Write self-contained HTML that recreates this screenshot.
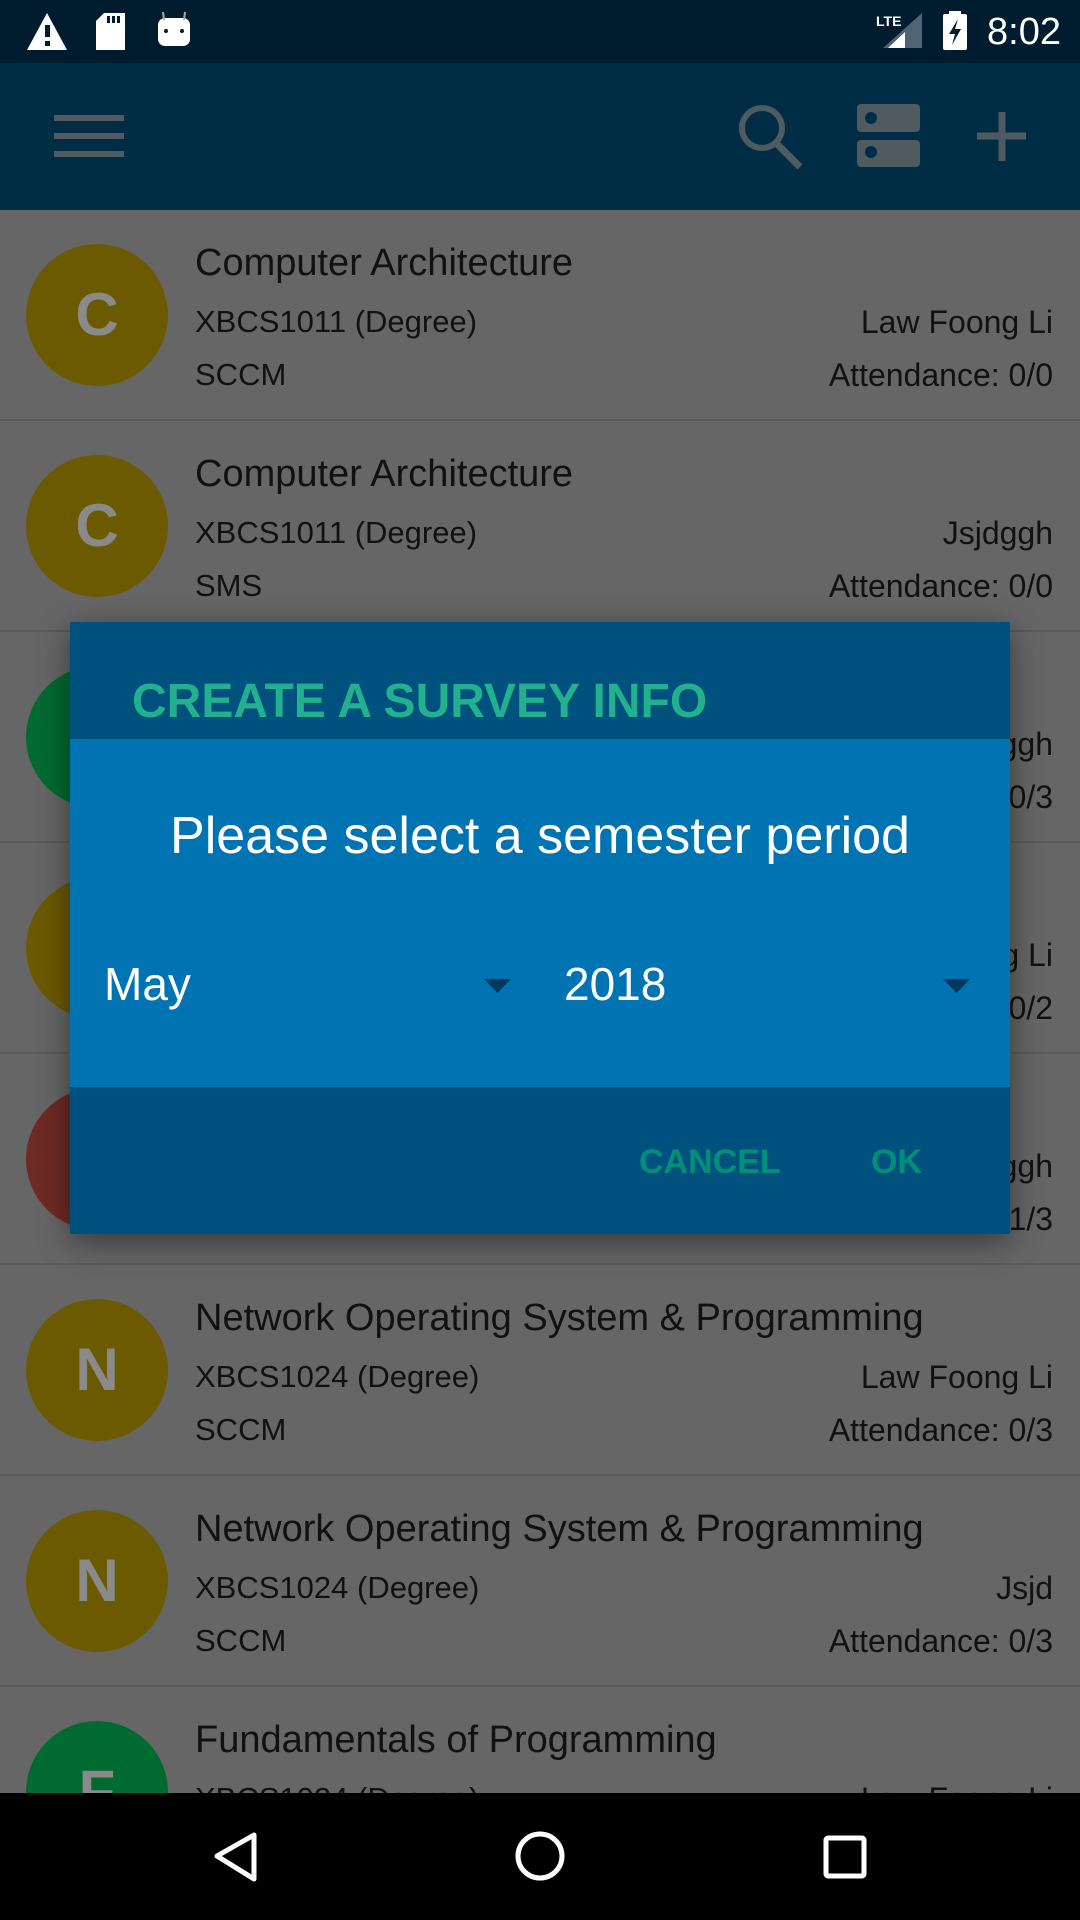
<!DOCTYPE html>
<html><head><meta charset="utf-8"><style>
*{margin:0;padding:0;box-sizing:border-box}
body{width:1080px;height:1920px;overflow:hidden;background:#666;font-family:"Liberation Sans",sans-serif;position:relative}
.abs{position:absolute}
.row{position:absolute;left:0;width:1080px;height:211px;border-bottom:2px solid #5a5a5a}
.av{position:absolute;left:26px;top:34px;width:142px;height:142px;border-radius:50%;color:#8a8a8a;font-size:60px;text-align:center;line-height:142px;font-weight:bold}
.t{position:absolute;left:195px;top:32px;font-size:38px;color:#111;white-space:nowrap}
.l2{position:absolute;left:195px;top:94px;font-size:31px;color:#111;white-space:nowrap}
.l3{position:absolute;left:195px;top:147px;font-size:31px;color:#111;white-space:nowrap}
.r2{position:absolute;right:27px;top:94px;font-size:32px;color:#111;white-space:nowrap}
.r3{position:absolute;right:27px;top:147px;font-size:32px;color:#111;white-space:nowrap}
</style></head><body>
<div class="abs" style="left:0;top:0;width:1080px;height:63px;background:#001c2e"></div>
<svg class="abs" style="left:0;top:0" width="1080" height="63">
<path d="M47 13 L67 50 L27 50 Z" fill="#fff"/><rect x="45" y="25" width="5" height="12" fill="#001c2e"/><rect x="45" y="41" width="5" height="5" fill="#001c2e"/>
<path d="M104 13 H125 V50 H96 V21 Z" fill="#fff"/><rect x="107" y="16" width="3" height="7" fill="#001c2e"/><rect x="112" y="16" width="3" height="7" fill="#001c2e"/><rect x="117" y="16" width="3" height="7" fill="#001c2e"/>
<rect x="158" y="18" width="32" height="28" rx="7" fill="#fff"/><path d="M164 20 L163 12 M184 20 L185 12" stroke="#aaa" stroke-width="2"/><circle cx="166" cy="31" r="2" fill="#001c2e"/><circle cx="182" cy="31" r="2" fill="#001c2e"/>
<text x="876" y="26" font-size="14" font-weight="bold" fill="#fff" font-family="Liberation Sans">LTE</text>
<path d="M922 13 V48 H883 Z" fill="#4e6373"/><path d="M905 32 V48 H888 Z" fill="#fff"/>
<rect x="943" y="14" width="24" height="36" rx="2" fill="#fff"/><rect x="949" y="11" width="12" height="4" fill="#fff"/>
<path d="M958 19 L949 34 H955 L952 45 L961 29 H955 Z" fill="#001c2e"/>
<text x="987" y="44" font-size="38" fill="#fff" font-family="Liberation Sans">8:02</text>
</svg>
<div class="abs" style="left:0;top:63px;width:1080px;height:147px;background:#002d45"></div>
<svg class="abs" style="left:0;top:63px" width="1080" height="147">
<g fill="#4f5a61"><rect x="54" y="52" width="70" height="6"/><rect x="54" y="70" width="70" height="6"/><rect x="54" y="88" width="70" height="6"/></g>
<circle cx="762" cy="65" r="20" fill="none" stroke="#4f5a61" stroke-width="6"/><path d="M776 80 L800 104" stroke="#4f5a61" stroke-width="7"/>
<rect x="857" y="41" width="63" height="28" rx="4" fill="#4f5a61"/><rect x="857" y="77" width="63" height="27" rx="4" fill="#4f5a61"/>
<circle cx="871" cy="55" r="6" fill="#002d45"/><circle cx="871" cy="89" r="6" fill="#002d45"/>
<path d="M977 73 H1026 M1002 49 V98" stroke="#4f5a61" stroke-width="7"/>
</svg>

<div class="row" style="top:210px"><div class="av" style="background:#6b5a00">C</div><div class="t">Computer Architecture</div><div class="l2">XBCS1011 (Degree)</div><div class="r2">Law Foong Li</div><div class="l3">SCCM</div><div class="r3">Attendance: 0/0</div></div>
<div class="row" style="top:421px"><div class="av" style="background:#6b5a00">C</div><div class="t">Computer Architecture</div><div class="l2">XBCS1011 (Degree)</div><div class="r2">Jsjdggh</div><div class="l3">SMS</div><div class="r3">Attendance: 0/0</div></div>
<div class="row" style="top:632px"><div class="av" style="background:#006b30">D</div><div class="t">Data Structures</div><div class="l2">XBCS1012 (Degree)</div><div class="r2">Jsjdggh</div><div class="l3">SCCM</div><div class="r3">Attendance: 0/3</div></div>
<div class="row" style="top:843px"><div class="av" style="background:#6b5a00">C</div><div class="t">Computer Architecture</div><div class="l2">XBCS1011 (Degree)</div><div class="r2">Law Foong Li</div><div class="l3">SCCM</div><div class="r3">Attendance: 0/2</div></div>
<div class="row" style="top:1054px"><div class="av" style="background:#6e2a25">M</div><div class="t">Mathematics</div><div class="l2">XBCS1013 (Degree)</div><div class="r2">Jsjdggh</div><div class="l3">SCCM</div><div class="r3">Attendance: 1/3</div></div>
<div class="row" style="top:1265px"><div class="av" style="background:#6b5a00">N</div><div class="t">Network Operating System &amp; Programming</div><div class="l2">XBCS1024 (Degree)</div><div class="r2">Law Foong Li</div><div class="l3">SCCM</div><div class="r3">Attendance: 0/3</div></div>
<div class="row" style="top:1476px"><div class="av" style="background:#6b5a00">N</div><div class="t">Network Operating System &amp; Programming</div><div class="l2">XBCS1024 (Degree)</div><div class="r2">Jsjd</div><div class="l3">SCCM</div><div class="r3">Attendance: 0/3</div></div>
<div class="row" style="top:1687px"><div class="av" style="background:#006b30">F</div><div class="t">Fundamentals of Programming</div><div class="l2">XBCS1024 (Degree)</div><div class="r2">Law Foong Li</div><div class="l3">SCCM</div><div class="r3">Attendance: 0/3</div></div>

<div class="abs" style="left:70px;top:622px;width:940px;height:612px;background:#00517d;box-shadow:0 8px 30px rgba(0,0,0,.45)">
  <div class="abs" style="left:62px;top:52px;font-size:48px;font-weight:bold;color:#22b08e;white-space:nowrap">CREATE A SURVEY INFO</div>
  <div class="abs" style="left:0;top:117px;width:940px;height:348px;background:#0073b2">
    <div class="abs" style="left:0;top:67px;width:940px;text-align:center;font-size:52px;color:#fff">Please select a semester period</div>
    <div class="abs" style="left:34px;top:218px;font-size:46px;color:#fff">May</div>
    <div class="abs" style="left:494px;top:218px;font-size:46px;color:#fff">2018</div>
    <svg class="abs" style="left:0;top:0" width="940" height="348"><path d="M414 240 H441 L427.5 254 Z" fill="#00395a"/><path d="M873 240 H900 L886.5 254 Z" fill="#00395a"/></svg>
  </div>
  <div class="abs" style="left:569px;top:521px;font-size:34px;font-weight:bold;color:#00907a">CANCEL</div>
  <div class="abs" style="left:801px;top:521px;font-size:34px;font-weight:bold;color:#00907a">OK</div>
</div>

<div class="abs" style="left:0;top:1793px;width:1080px;height:127px;background:#000"></div>
<svg class="abs" style="left:0;top:1793px" width="1080" height="127">
<path d="M254 42 L217 63 L254 86 Z" fill="none" stroke="#fff" stroke-width="5" stroke-linejoin="round"/>
<circle cx="540" cy="63" r="22" fill="none" stroke="#fff" stroke-width="5"/>
<rect x="826" y="45" width="38" height="38" rx="2" fill="none" stroke="#fff" stroke-width="5"/>
</svg>
</body></html>
